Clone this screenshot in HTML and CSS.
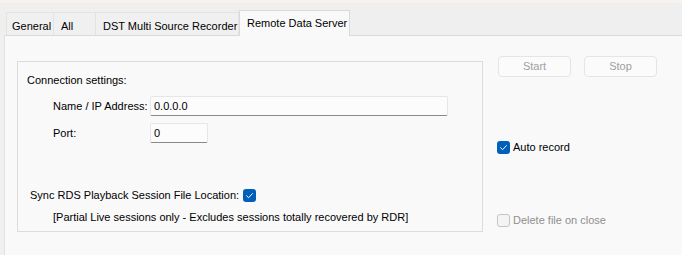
FILE: index.html
```html
<!DOCTYPE html>
<html>
<head>
<meta charset="utf-8">
<link rel="stylesheet" href="styles.css">
</head>
<body>
<div class="topstrip"></div>
<div class="tabstrip">
  <div class="tab t-general">General</div>
  <div class="tab t-all">All</div>
  <div class="tab t-dst">DST Multi Source Recorder</div>
  <div class="tab t-rds selected">Remote Data Server</div>
</div>
<div class="panel">
  <div class="group">
    <div class="group-title">Connection settings:</div>
    <div class="fields">
      <div class="label">Name / IP Address:</div>
      <div class="textbox wide">0.0.0.0</div>
      <div class="label">Port:</div>
      <div class="textbox short">0</div>
    </div>
    <div class="sync-row">
      <span>Sync RDS Playback Session File Location:</span>
      <span class="check on"><svg viewBox="0 0 13 13" width="13" height="13"><path d="M3.6 6.8 L5.6 8.7 L9.4 4.6" fill="none" stroke="#ffffff" stroke-width="1" stroke-linecap="round" stroke-linejoin="round"/></svg></span>
    </div>
    <div class="note">[Partial Live sessions only - Excludes sessions totally recovered by RDR]</div>
  </div>
  <div class="side">
    <div class="buttons">
      <div class="btn">Start</div>
      <div class="btn">Stop</div>
    </div>
    <div class="cb cb-auto">
      <span class="check on"><svg viewBox="0 0 13 13" width="13" height="13"><path d="M3.6 6.8 L5.6 8.7 L9.4 4.6" fill="none" stroke="#ffffff" stroke-width="1" stroke-linecap="round" stroke-linejoin="round"/></svg></span>
      <span>Auto record</span>
    </div>
    <div class="cb cb-delete disabled">
      <span class="check off"></span>
      <span>Delete file on close</span>
    </div>
  </div>
</div>
</body>
</html>
```
FILE: styles.css
```css
html, body {
  margin: 0;
  padding: 0;
  background: #f0f0f0;
  font-family: "Liberation Sans", Arial, sans-serif;
  font-size: 11px;
  color: #000;
  width: 682px;
  height: 255px;
  overflow: hidden;
}

.topstrip {
  height: 3px;
  background: #f8f2ef;
}

.tabstrip {
  height: 32px;
  padding-left: 6px;
  display: flex;
  align-items: flex-end;
  background: #efefef;
  position: relative;
  z-index: 2;
}

.tab {
  box-sizing: border-box;
  height: 23px;
  line-height: 22px;
  padding-top: 2px;
  padding-left: 6px;
  border: 1px solid #e3e3e3;
  border-bottom: none;
  background: #f0f0f0;
  white-space: nowrap;
}

.tab + .tab { border-left: none; }

.t-general { width: 48px; padding-left: 5px; }
.t-all { width: 42px; padding-left: 7px; }
.t-dst { width: 143px; padding-left: 7px; }
.t-rds {
  width: 111px;
  padding-left: 7px;
}

.tab.selected {
  height: 26px;
  margin-bottom: -1px;
  line-height: 22px;
  padding-top: 1px;
  background: #f9f9f9;
  border: 1px solid #dadada;
  border-bottom: none;
}

.panel {
  margin-left: 4px;
  height: 220px;
  box-sizing: border-box;
  background: #f9f9f9;
  border-top: 1px solid #dadada;
  border-left: 1px solid #e2e2e2;
  padding: 20px 0 0 12px;
  display: flex;
  align-items: flex-start;
  gap: 14px;
}

.group {
  width: 466px;
  height: 171px;
  box-sizing: border-box;
  margin-top: 5px;
  border: 1px solid #dcdcdc;
  padding: 11px 0 0 9px;
  line-height: 15px;
}

.fields {
  margin: 8px 0 0 26px;
  display: grid;
  grid-template-columns: 97px auto;
  row-gap: 7px;
  align-items: center;
}

.textbox {
  box-sizing: border-box;
  height: 20px;
  line-height: 18px;
  padding-left: 3px;
  background: #fcfcfc;
  border: 1px solid #e6e6e6;
  border-bottom: 1px solid #8a8a8a;
  border-radius: 2px;
}

.textbox.wide { width: 298px; }
.textbox.short { width: 58px; }

.sync-row {
  margin: 45px 0 0 3px;
  display: flex;
  align-items: center;
  gap: 4px;
}

.note {
  margin: 7px 0 0 26px;
  white-space: nowrap;
}

.check {
  box-sizing: border-box;
  width: 13px;
  height: 13px;
  border-radius: 3px;
  display: inline-block;
  flex: none;
}

.check svg { display: block; }

.check.on { background: #005fb8; }

.check.off {
  background: #f4f4f4;
  border: 1px solid #c4c4c4;
}

.side {
  display: flex;
  flex-direction: column;
  align-items: flex-start;
}

.buttons {
  display: flex;
  gap: 13px;
  margin-left: 1px;
}

.btn {
  box-sizing: border-box;
  width: 73px;
  height: 21px;
  line-height: 19px;
  text-align: center;
  border: 1px solid #e5e5e5;
  border-radius: 4px;
  background: #fbfbfb;
  color: #a0a0a0;
}

.cb {
  display: flex;
  align-items: center;
  gap: 3px;
  line-height: 15px;
}

.cb-auto { margin-top: 63px; }
.cb-delete { margin-top: 58px; }

.cb.disabled { color: #8f8f8f; }
```
